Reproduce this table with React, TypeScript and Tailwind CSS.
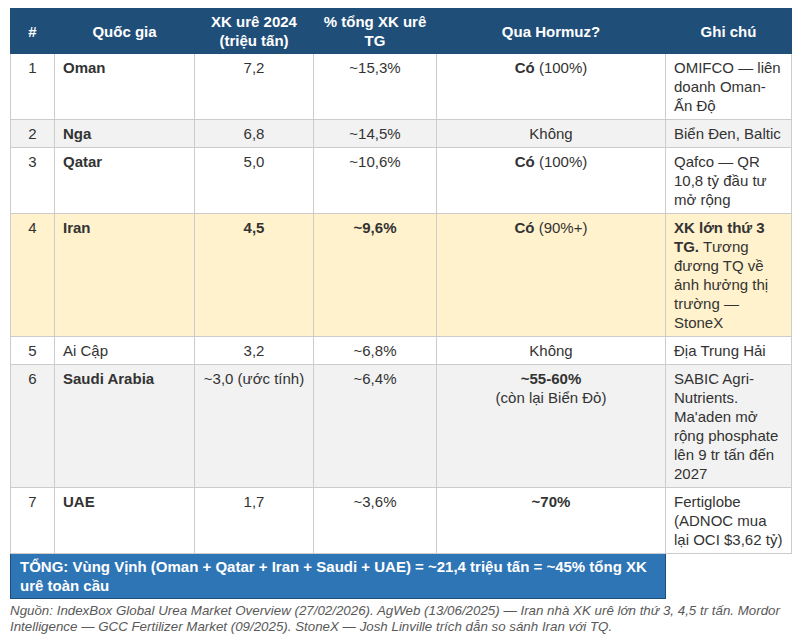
import React from "react";

const td = "border border-[#cccccc] px-[8px] py-[4px] align-top";

type Row = {
  n: string;
  name: React.ReactNode;
  xk: React.ReactNode;
  pct: React.ReactNode;
  hz: React.ReactNode;
  note: React.ReactNode;
  bg: string;
};

const rows: Row[] = [
  {
    n: "1",
    name: <b>Oman</b>,
    xk: "7,2",
    pct: "~15,3%",
    hz: (
      <>
        <b>Có</b> (100%)
      </>
    ),
    note: "OMIFCO — liên doanh Oman-Ấn Độ",
    bg: "bg-white",
  },
  {
    n: "2",
    name: <b>Nga</b>,
    xk: "6,8",
    pct: "~14,5%",
    hz: "Không",
    note: "Biển Đen, Baltic",
    bg: "bg-[#f2f2f2]",
  },
  {
    n: "3",
    name: <b>Qatar</b>,
    xk: "5,0",
    pct: "~10,6%",
    hz: (
      <>
        <b>Có</b> (100%)
      </>
    ),
    note: "Qafco — QR 10,8 tỷ đầu tư mở rộng",
    bg: "bg-white",
  },
  {
    n: "4",
    name: <b>Iran</b>,
    xk: <b>4,5</b>,
    pct: <b>~9,6%</b>,
    hz: (
      <>
        <b>Có</b> (90%+)
      </>
    ),
    note: (
      <>
        <b>XK lớn thứ 3 TG.</b> Tương đương TQ về ảnh hưởng thị trường — StoneX
      </>
    ),
    bg: "bg-[#fff2cc]",
  },
  {
    n: "5",
    name: "Ai Cập",
    xk: "3,2",
    pct: "~6,8%",
    hz: "Không",
    note: "Địa Trung Hải",
    bg: "bg-white",
  },
  {
    n: "6",
    name: <b>Saudi Arabia</b>,
    xk: "~3,0 (ước tính)",
    pct: "~6,4%",
    hz: (
      <>
        <b>~55-60%</b>
        <br />
        (còn lại Biển Đỏ)
      </>
    ),
    note: "SABIC Agri-Nutrients. Ma'aden mở rộng phosphate lên 9 tr tấn đến 2027",
    bg: "bg-[#f2f2f2]",
  },
  {
    n: "7",
    name: <b>UAE</b>,
    xk: "1,7",
    pct: "~3,6%",
    hz: <b>~70%</b>,
    note: "Fertiglobe (ADNOC mua lại OCI $3,62 tỷ)",
    bg: "bg-white",
  },
];

export default function App() {
  return (
    <div
      className="w-[806px] h-[642px] bg-white pl-[10px] pt-[8px] text-[#333333]"
      style={{ fontFamily: '"Liberation Sans", Arial, sans-serif' }}
    >
      <table className="table-fixed border-collapse w-[781px] text-[15px] leading-[19px]">
        <colgroup>
          <col className="w-[44px]" />
          <col className="w-[140px]" />
          <col className="w-[119px]" />
          <col className="w-[123px]" />
          <col className="w-[229px]" />
          <col className="w-[126px]" />
        </colgroup>
        <thead>
          <tr className="bg-[#1f4e79] text-white font-bold">
            <th className="border border-[#1f4e79] px-[8px] py-[3px] text-center align-middle">#</th>
            <th className="border border-[#1f4e79] px-[8px] py-[3px] text-center align-middle">Quốc gia</th>
            <th className="border border-[#1f4e79] px-[8px] py-[3px] text-center align-middle">
              XK urê 2024 (triệu tấn)
            </th>
            <th className="border border-[#1f4e79] px-[8px] py-[3px] text-center align-middle">
              % tổng XK urê TG
            </th>
            <th className="border border-[#1f4e79] px-[8px] py-[3px] text-center align-middle">Qua Hormuz?</th>
            <th className="border border-[#1f4e79] px-[8px] py-[3px] text-center align-middle">Ghi chú</th>
          </tr>
        </thead>
        <tbody>
          {rows.map((r) => (
            <tr key={r.n} className={r.bg}>
              <td className={`${td} text-center`}>{r.n}</td>
              <td className={`${td} text-left`}>{r.name}</td>
              <td className={`${td} text-center`}>{r.xk}</td>
              <td className={`${td} text-center`}>{r.pct}</td>
              <td className={`${td} text-center`}>{r.hz}</td>
              <td className={`${td} text-left`}>{r.note}</td>
            </tr>
          ))}
          <tr>
            <td
              colSpan={5}
              className="border border-[#1f4e79] bg-[#2e75b6] text-white font-bold px-[9px] py-[3px] align-top text-left"
            >
              TỔNG: Vùng Vịnh (Oman + Qatar + Iran + Saudi + UAE) = ~21,4 triệu tấn = ~45% tổng XK urê toàn cầu
            </td>
            <td className="bg-white"></td>
          </tr>
        </tbody>
      </table>
      <p className="w-[781px] mt-[4px] text-[13.33px] leading-[16px] italic text-[#595959]">
        Nguồn: IndexBox Global Urea Market Overview (27/02/2026). AgWeb (13/06/2025) — Iran nhà XK urê lớn thứ 3, 4,5 tr tấn. Mordor Intelligence — GCC Fertilizer Market (09/2025). StoneX — Josh Linville trích dẫn so sánh Iran với TQ.
      </p>
    </div>
  );
}
